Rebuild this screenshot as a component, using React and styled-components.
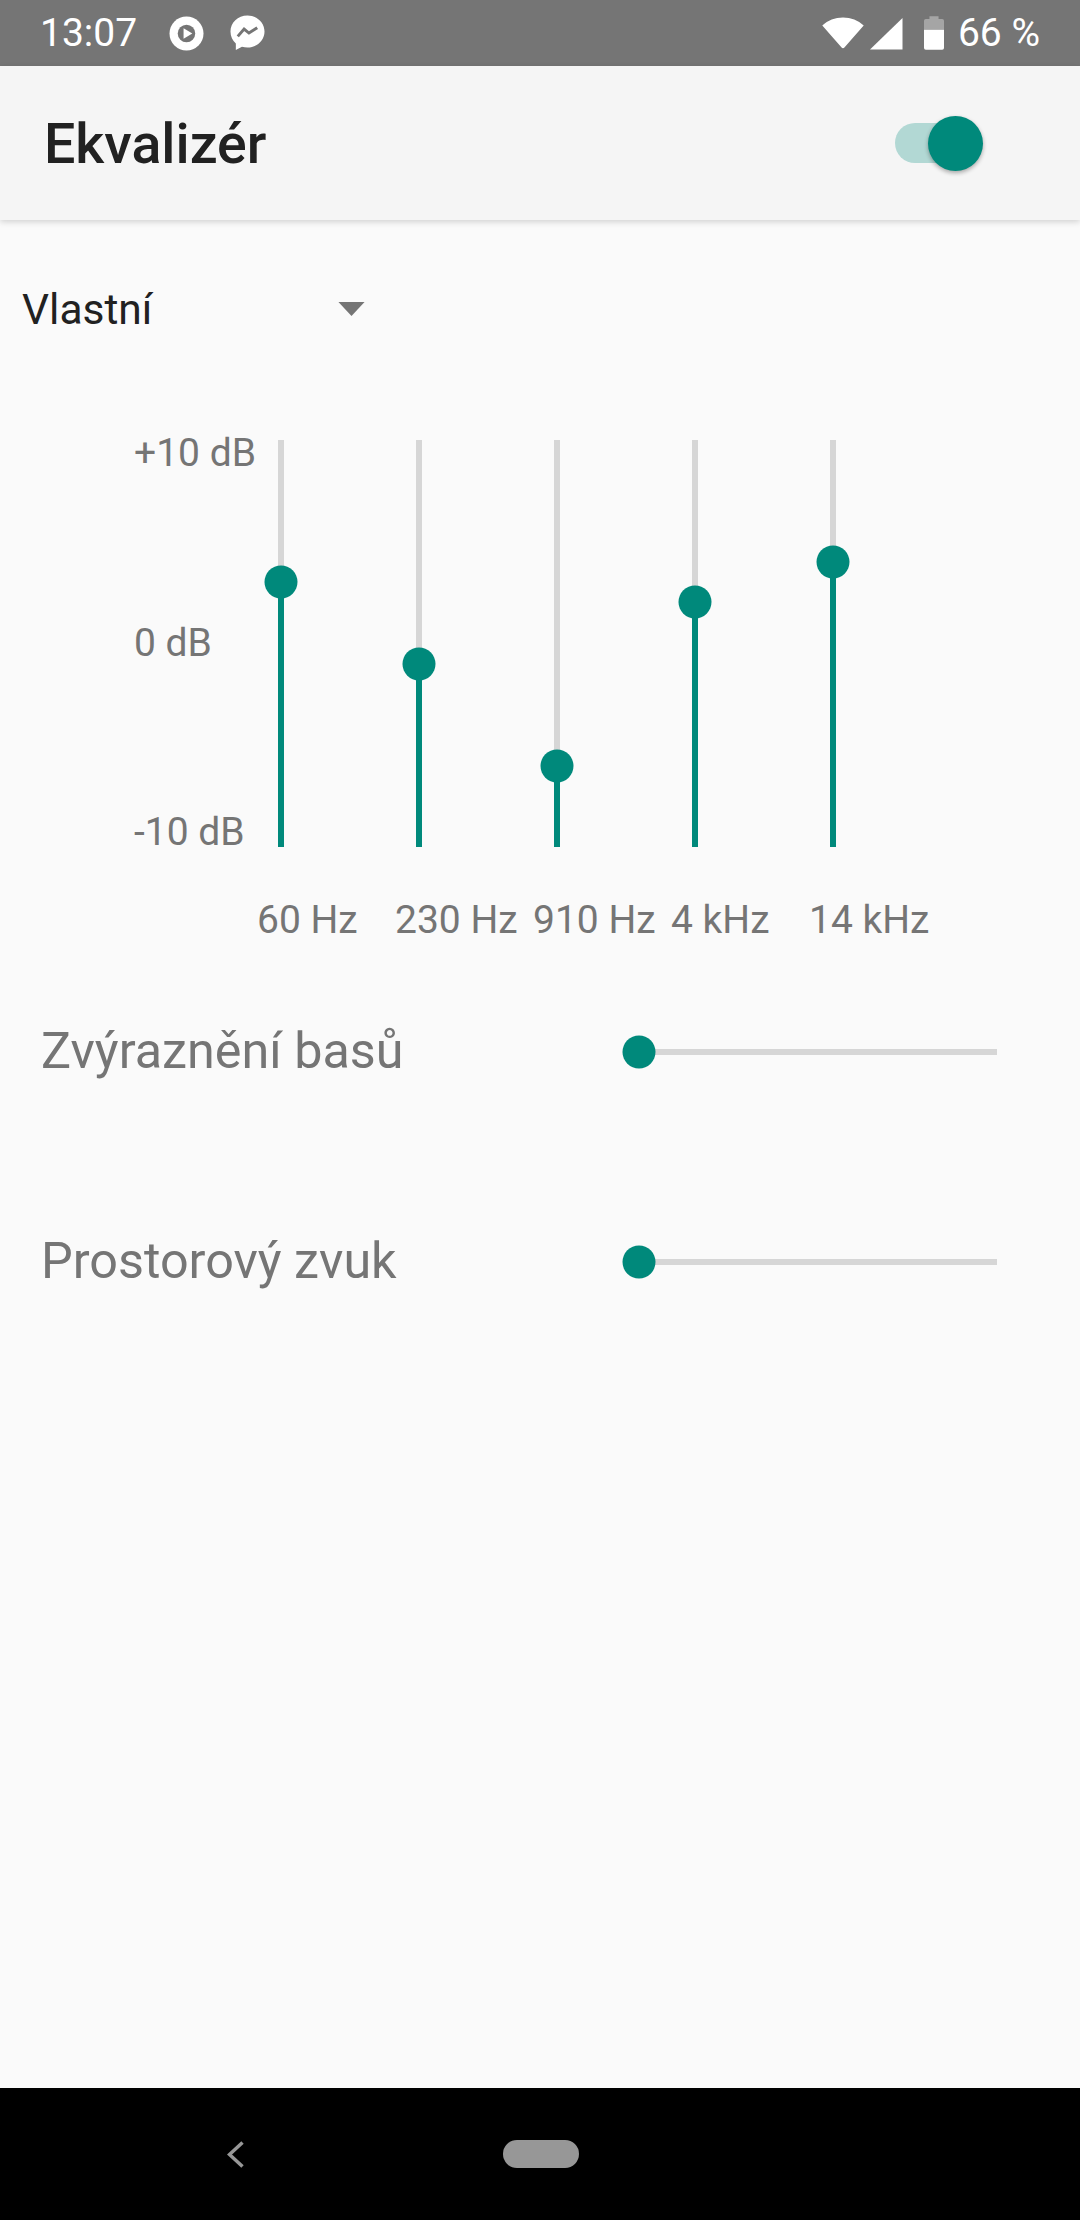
import React from "react";
import styled, { createGlobalStyle } from "styled-components";

const Global = createGlobalStyle`
  html, body { margin: 0; padding: 0; background: #fafafa; }
  body { font-family: Roboto, "Noto Sans", sans-serif; }
  * { box-sizing: border-box; }
`;

const Screen = styled.div`
  width: 1080px;
  height: 2220px;
  display: flex;
  flex-direction: column;
  overflow: hidden;
  background: #fafafa;
`;

const StatusBar = styled.div`
  height: 66px;
  flex: none;
  background: #757575;
  color: #fff;
  display: flex;
  align-items: center;
  padding: 0 40px;
  font-size: 39px;
`;

const Clock = styled.span`
  width: 129px;
`;

const StatusIcon = styled.svg`
  display: block;
  flex: none;
  margin-right: ${(p) => p.$gap || 0}px;
`;

const Spacer = styled.div`
  flex: 1;
`;

const AppBar = styled.header`
  height: 154px;
  flex: none;
  background: #f5f5f5;
  box-shadow: 0 2px 6px rgba(0, 0, 0, 0.16);
  display: flex;
  align-items: center;
  justify-content: space-between;
  padding: 0 97px 0 44px;
  position: relative;
  z-index: 1;
`;

const Title = styled.h1`
  margin: 3px 0 0;
  font-size: 55.500px;
  font-weight: 500;
  color: #212121;
`;

const Switch = styled.div`
  width: 88px;
  height: 55px;
  position: relative;
`;

const SwitchTrack = styled.div`
  position: absolute;
  left: 0;
  top: 7px;
  width: 70px;
  height: 40px;
  border-radius: 20px;
  background: #b2d8d4;
`;

const SwitchThumb = styled.div`
  position: absolute;
  right: 0;
  top: 0;
  width: 55px;
  height: 55px;
  border-radius: 50%;
  background: #00897b;
  box-shadow: 0 2px 4px rgba(0, 0, 0, 0.32);
`;

const Preset = styled.div`
  display: flex;
  align-items: center;
  height: 60px;
  margin-top: 59px;
  padding-left: 22px;
`;

const PresetName = styled.span`
  width: 316px;
  font-size: 42.500px;
  color: #212121;
`;

const Equalizer = styled.section`
  margin-top: 101px;
  padding-left: 134px;
  display: grid;
  grid-template-columns: 123px repeat(5, 138px);
`;

const Scale = styled.div`
  height: 405px;
  font-size: 39px;
  line-height: 26px;
  color: #757575;
  display: flex;
  flex-direction: column;
  justify-content: space-between;
`;

const BandCell = styled.div`
  display: flex;
  padding-left: 21px;
`;

const VTrack = styled.div`
  position: relative;
  width: 6px;
  height: 407px;
  background: #d6d6d6;
`;

const VFill = styled.div`
  position: absolute;
  left: 0;
  right: 0;
  bottom: 0;
  background: #00897b;
`;

const Thumb = styled.div`
  position: absolute;
  width: 33px;
  height: 33px;
  border-radius: 50%;
  background: #00897b;
  transform: translate(-50%, -50%);
`;

const VThumb = styled(Thumb)`
  left: 3px;
`;

const FreqSpacer = styled.div`
  grid-column: 1;
`;

const FreqLabel = styled.div`
  font-size: 39px;
  line-height: 46px;
  color: #757575;
  margin-top: 50px;
  white-space: nowrap;
`;

const EffectList = styled.section`
  margin-top: 78px;
  display: flex;
  flex-direction: column;
  gap: 148px;
  padding: 0 83px 0 41px;
`;

const EffectRow = styled.div`
  display: flex;
  align-items: center;
  justify-content: space-between;
  height: 62px;
`;

const EffectName = styled.span`
  font-size: 50.300px;
  line-height: 58px;
  margin-top: -3px;
  color: #757575;
`;

const HTrack = styled.div`
  position: relative;
  width: 358px;
  height: 6px;
  background: #d6d6d6;
`;

const HThumb = styled(Thumb)`
  left: 0;
  top: 50%;
`;

const NavBar = styled.nav`
  margin-top: auto;
  height: 132px;
  flex: none;
  background: #000;
  display: flex;
  align-items: center;
  padding-left: 227px;
`;

const HomePill = styled.div`
  width: 76px;
  height: 28px;
  border-radius: 14px;
  background: #979797;
  margin-left: 259px;
`;

const bands = [
  { label: "60 Hz", y: 582 },
  { label: "230 Hz", y: 664 },
  { label: "910 Hz", y: 766 },
  { label: "4 kHz", y: 602 },
  { label: "14 kHz", y: 562 },
];

const TOP = 440;
const HEIGHT = 407;

export default function App() {
  return (
    <Screen>
      <Global />
      <StatusBar>
        <Clock>13:07</Clock>
        <StatusIcon width="35" height="35" viewBox="0 0 36 36" $gap={26}>
          <circle cx="18" cy="18" r="17.500" fill="#fff" />
          <circle cx="18" cy="18" r="9" fill="#757575" />
          <path d="M15 12.500 L24 18 L15 23.500 Z" fill="#fff" />
        </StatusIcon>
        <StatusIcon width="35" height="37" viewBox="0 0 36 38">
          <path d="M18 .5C8 .5.5 7.700.5 17c0 5 2.100 9.300 5.500 12.300V36l6.300-3.500c1.800.5 3.700.8 5.700.8 10 0 17.500-7.200 17.500-16.300S28 .5 18 .5z" fill="#fff" />
          <path d="M8 22 L14.500 14.500 L19.500 18.500 L28 13" fill="none" stroke="#757575" strokeWidth="3" />
        </StatusIcon>
        <Spacer />
        <StatusIcon width="42" height="32" viewBox="0 0 44 34" $gap={6}>
          <path d="M0 9C6 3.500 13.500 .5 22 .5S38 3.500 44 9L23.500 32.500c-.8 1-2.200 1-3 0z" fill="#fff" />
        </StatusIcon>
        <StatusIcon width="33" height="33" viewBox="0 0 34 34" $gap={21}>
          <path d="M33.500 1V33.500H0z" fill="#fff" />
        </StatusIcon>
        <StatusIcon width="20" height="36" viewBox="0 0 22 37" $gap={14}>
          <path d="M6 0h10v3h4a2 2 0 0 1 2 2v10H0V5a2 2 0 0 1 2-2h4z" fill="#fff" fillOpacity="0.35" />
          <path d="M0 15h22v20a2 2 0 0 1-2 2H2a2 2 0 0 1-2-2z" fill="#fff" />
        </StatusIcon>
        <span>66 %</span>
      </StatusBar>

      <AppBar>
        <Title>Ekvalizér</Title>
        <Switch>
          <SwitchTrack />
          <SwitchThumb />
        </Switch>
      </AppBar>

      <Preset>
        <PresetName>Vlastní</PresetName>
        <svg width="27" height="14" viewBox="0 0 28 15">
          <path d="M0 0H28L14 15Z" fill="#757575" />
        </svg>
      </Preset>

      <Equalizer>
        <Scale>
          <span>+10 dB</span>
          <span>0 dB</span>
          <span>-10 dB</span>
        </Scale>
        {bands.map((b) => {
          const pos = b.y - TOP;
          return (
            <BandCell key={b.label}>
              <VTrack>
                <VFill style={{ height: HEIGHT - pos }} />
                <VThumb style={{ top: pos }} />
              </VTrack>
            </BandCell>
          );
        })}
        <FreqSpacer />
        {bands.map((b) => (
          <FreqLabel key={b.label}>{b.label}</FreqLabel>
        ))}
      </Equalizer>

      <EffectList>
        {["Zvýraznění basů", "Prostorový zvuk"].map((name) => (
          <EffectRow key={name}>
            <EffectName>{name}</EffectName>
            <HTrack>
              <HThumb />
            </HTrack>
          </EffectRow>
        ))}
      </EffectList>

      <NavBar>
        <svg width="17" height="27" viewBox="0 0 17 27">
          <path d="M15.500 1.500 L2.500 13.500 L15.500 25.500" fill="none" stroke="#979797" strokeWidth="3.500" />
        </svg>
        <HomePill />
      </NavBar>
    </Screen>
  );
}
